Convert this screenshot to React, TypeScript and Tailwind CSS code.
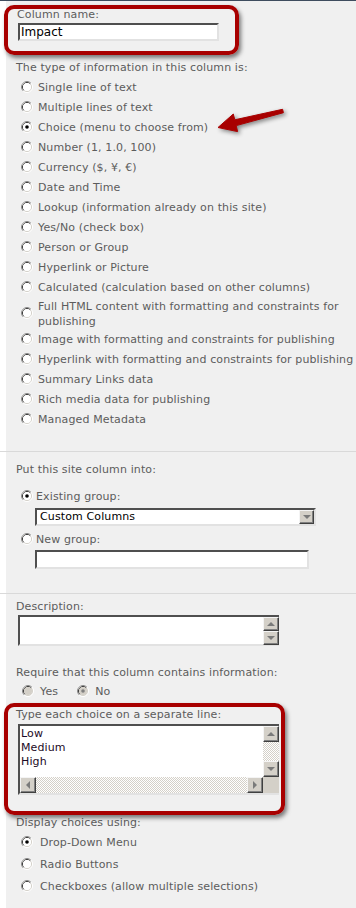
import React from 'react';

const TYPES: string[] = [
    'Single line of text',
    'Multiple lines of text',
    'Choice (menu to choose from)',
    'Number (1, 1.0, 100)',
    'Currency ($, ¥, €)',
    'Date and Time',
    'Lookup (information already on this site)',
    'Yes/No (check box)',
    'Person or Group',
    'Hyperlink or Picture',
    'Calculated (calculation based on other columns)',
    'Full HTML content with formatting and constraints for publishing',
    'Image with formatting and constraints for publishing',
    'Hyperlink with formatting and constraints for publishing',
    'Summary Links data',
    'Rich media data for publishing',
    'Managed Metadata',
];

// classic windows radio button
function Radio({ checked = false, disabled = false }: { checked?: boolean; disabled?: boolean }) {
    return (
        <svg width="12" height="12" viewBox="0 0 12 12" className="shrink-0 -mt-[3px]">
            <circle cx="6" cy="6" r="5.5" fill="none" stroke="#ffffff" />
            <path d="M9.89 2.11 A5.5 5.5 0 0 0 2.11 9.89" fill="none" stroke="#8a8a8a" />
            <circle cx="6" cy="6" r="4.5" fill="none" stroke="#d4d0c8" />
            <path d="M9.18 2.82 A4.5 4.5 0 0 0 2.82 9.18" fill="none" stroke="#404040" />
            <circle cx="6" cy="6" r="4" fill={disabled ? '#d4d0c8' : '#ffffff'} />
            {checked && <circle cx="6" cy="6" r="1.8" fill={disabled ? '#808080' : '#000000'} />}
        </svg>
    );
}

function ScrollBtn({ dir, w = 16, h = 16 }: { dir: 'up' | 'down' | 'left' | 'right'; w?: number; h?: number }) {
    const pts = {
        up: '2,5 6,1 10,5',
        down: '2,1 6,5 10,1',
        left: '5,2 1,6 5,10',
        right: '1,2 5,6 1,10',
    }[dir];
    const vert = dir === 'up' || dir === 'down';
    return (
        <div
            style={{ width: w, height: h }}
            className="shrink-0 box-border bg-[#d4d0c8] border border-t-[#f4f4f4] border-l-[#f4f4f4] border-r-[#404040] border-b-[#404040] shadow-[inset_-1px_-1px_0_#808080] flex items-center justify-center"
        >
            <svg width={vert ? 12 : 6} height={vert ? 6 : 12} viewBox={vert ? '0 0 12 6' : '0 0 6 12'}>
                <polygon points={pts} fill="#7a7a7a" />
            </svg>
        </div>
    );
}

const hatch = 'bg-[repeating-conic-gradient(#d4d0c8_0%_25%,#ffffff_0%_50%)] bg-[length:2px_2px]';
const inset = 'box-border border-2 border-t-[#4f4f4f] border-l-[#4f4f4f] border-b-[#e2e2e2] border-r-[#e2e2e2]';

function RedBox({ className }: { className: string }) {
    return (
        <div
            className={`absolute pointer-events-none rounded-[10px] border-[4px] border-[#a80000] shadow-[2px_3px_4px_rgba(0,0,0,0.5)] ${className}`}
        />
    );
}

export default function App() {
    return (
        <div className="relative w-[356px] h-[908px] overflow-hidden bg-white flex flex-col border-t border-[#3e4c5e] font-['DejaVu_Sans',Verdana,sans-serif] text-[11px] tracking-[0.12px] leading-[14px] text-[#5c5c5c]">
            {/* name + type */}
            <div className="ml-[6px] bg-[#f0f0f0] pl-[10px] pt-[7px] pb-[21px]">
                <div className="ml-[1px]">Column name:</div>
                <div className={`mt-[1px] ml-[2px] w-[201px] h-[18px] bg-white ${inset} px-[1px] text-black text-[12px] leading-[14px] tracking-normal`}>
                    Impact
                </div>
                <div className="mt-[20px]">The type of information in this column is:</div>
                <div className="mt-[3px] flex flex-col">
                    {TYPES.map((t, i) => {
                        const twoLine = t.startsWith('Full HTML');
                        return (
                            <div
                                key={t}
                                className={`flex items-center gap-[5px] pl-[5px] ${twoLine ? 'h-[32px]' : 'h-[20px]'}`}
                            >
                                <Radio checked={i === 2} />
                                <span className={twoLine ? 'leading-[15px]' : 'whitespace-nowrap'}>{t}</span>
                            </div>
                        );
                    })}
                </div>
            </div>
            <div className="h-px bg-[#d9d9d9]" />

            {/* group */}
            <div className="ml-[6px] bg-[#f0f0f0] pl-[10px] pt-[11px] pb-[24px]">
                <div>Put this site column into:</div>
                <div className="mt-[10px] h-[20px] flex items-center gap-[3px] pl-[5px]">
                    <Radio checked />
                    <span>Existing group:</span>
                </div>
                <div className={`mt-[1px] ml-[19px] w-[281px] h-[18px] bg-white ${inset} flex items-center text-black`}>
                    <span className="flex-1 pl-[3px]">Custom Columns</span>
                    <ScrollBtn dir="down" w={15} h={14} />
                </div>
                <div className="mt-[4px] h-[20px] flex items-center gap-[3px] pl-[5px]">
                    <Radio />
                    <span>New group:</span>
                </div>
                <div className={`ml-[19px] w-[274px] h-[19px] bg-white ${inset}`} />
            </div>
            <div className="h-px bg-[#d9d9d9]" />

            {/* description, required, choices */}
            <div className="flex-1 ml-[6px] bg-[#f0f0f0] pl-[10px] pt-[6px]">
                <div>Description:</div>
                <div className={`mt-[1px] ml-[2px] w-[261px] h-[31px] bg-white ${inset} border-r-0 flex`}>
                    <div className="flex-1" />
                    <div className="flex flex-col">
                        <ScrollBtn dir="up" h={14} />
                        <ScrollBtn dir="down" h={14} />
                    </div>
                </div>
                <div className="mt-[20px]">Require that this column contains information:</div>
                <div className="mt-[2px] h-[20px] flex items-center pl-[6px]">
                    <Radio disabled />
                    <span className="ml-[6px]">Yes</span>
                    <span className="ml-[19px] flex items-center">
                        <Radio checked disabled />
                    </span>
                    <span className="ml-[6px]">No</span>
                </div>
                <div className="mt-[6px]">Type each choice on a separate line:</div>
                <div className={`mt-[2px] ml-[2px] w-[261px] h-[71px] bg-white ${inset} border-r-0 flex flex-col`}>
                    <div className="flex flex-1">
                        <div className="flex-1 pl-[1px] pt-[1px] text-[#1c0a26] leading-[14px]">
                            <div>Low</div>
                            <div>Medium</div>
                            <div>High</div>
                        </div>
                        <div className="flex flex-col">
                            <ScrollBtn dir="up" />
                            <div className={`flex-1 w-[16px] ${hatch}`} />
                            <ScrollBtn dir="down" />
                        </div>
                    </div>
                    <div className="flex h-[16px]">
                        <ScrollBtn dir="left" />
                        <div className={`flex-1 ${hatch}`} />
                        <ScrollBtn dir="right" />
                        <div className="w-[16px] bg-[#d4d0c8]" />
                    </div>
                </div>
                <div className="mt-[21px]">Display choices using:</div>
                <div className="mt-[2px] flex flex-col">
                    {['Drop-Down Menu', 'Radio Buttons', 'Checkboxes (allow multiple selections)'].map((t, i) => (
                        <div key={t} className="h-[22px] flex items-center gap-[7px] pl-[5px]">
                            <Radio checked={i === 0} />
                            <span>{t}</span>
                        </div>
                    ))}
                </div>
            </div>

            {/* callouts */}
            <RedBox className="left-[4px] top-[4px] w-[235px] h-[50px]" />
            <RedBox className="left-[4px] top-[702px] w-[281px] h-[112px]" />
            <svg
                width="356"
                height="140"
                viewBox="0 0 356 140"
                className="absolute left-0 top-0 pointer-events-none drop-shadow-[2px_2px_2px_rgba(0,0,0,0.45)]"
            >
                <polygon
                    points="282.6,108.3 234.8,118.8 233.3,113 218,126.5 237.6,130.6 236.2,124.6 283.4,111.7"
                    fill="#a80000"
                    stroke="#a80000"
                    strokeWidth="1"
                    strokeLinejoin="round"
                />
            </svg>
        </div>
    );
}
